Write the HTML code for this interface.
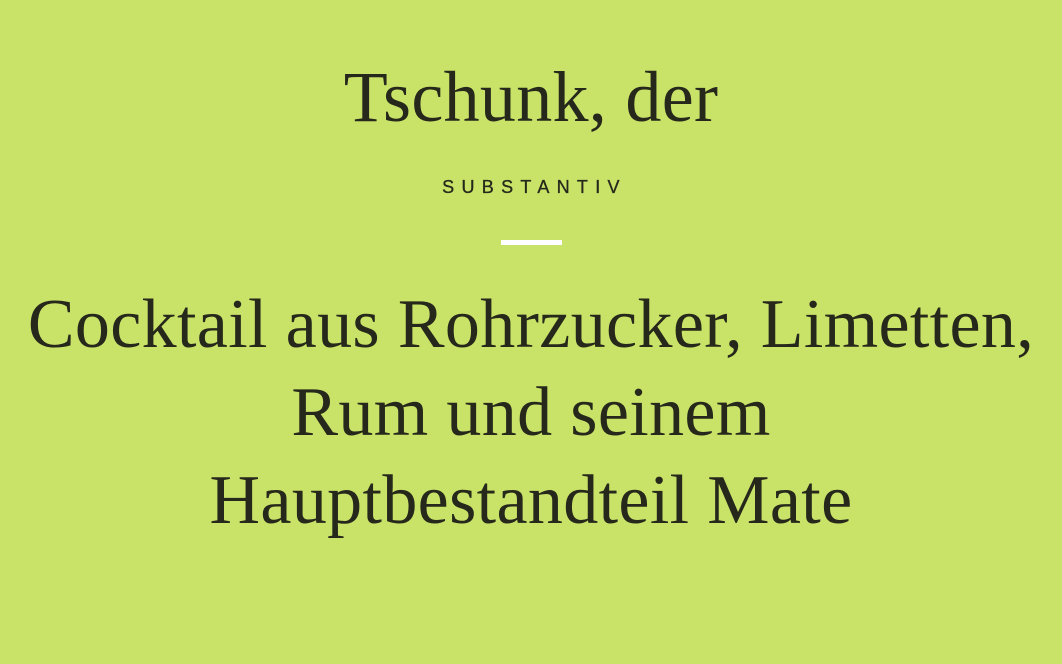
<!DOCTYPE html>
<html><head><meta charset="utf-8"><style>
html,body{margin:0;padding:0}
body{width:1062px;height:664px;background:#c9e268;position:relative;overflow:hidden;color:#25281a}
.s{font-family:"Liberation Serif",serif;position:absolute;left:0;width:1062px;text-align:center;white-space:nowrap}
#t{top:57px;font-size:72px;line-height:80px;letter-spacing:0.3px}
#sub{position:absolute;left:0;width:1062px;text-align:center;top:177px;font-family:"Liberation Sans",sans-serif;font-size:18px;letter-spacing:7.3px;line-height:20px;padding-left:7px;box-sizing:border-box;-webkit-text-stroke:0.3px #25281a}
#bar{position:absolute;left:501px;top:240px;width:61px;height:5px;background:#fff}
#b{top:281px;font-size:70px;line-height:88px;letter-spacing:0.35px}
</style></head><body>
<div class="s" id="t">Tschunk, der</div>
<div id="sub">SUBSTANTIV</div>
<div id="bar"></div>
<div class="s" id="b">Cocktail aus Rohrzucker, Limetten,<br>Rum und seinem<br>Hauptbestandteil Mate</div>
</body></html>
